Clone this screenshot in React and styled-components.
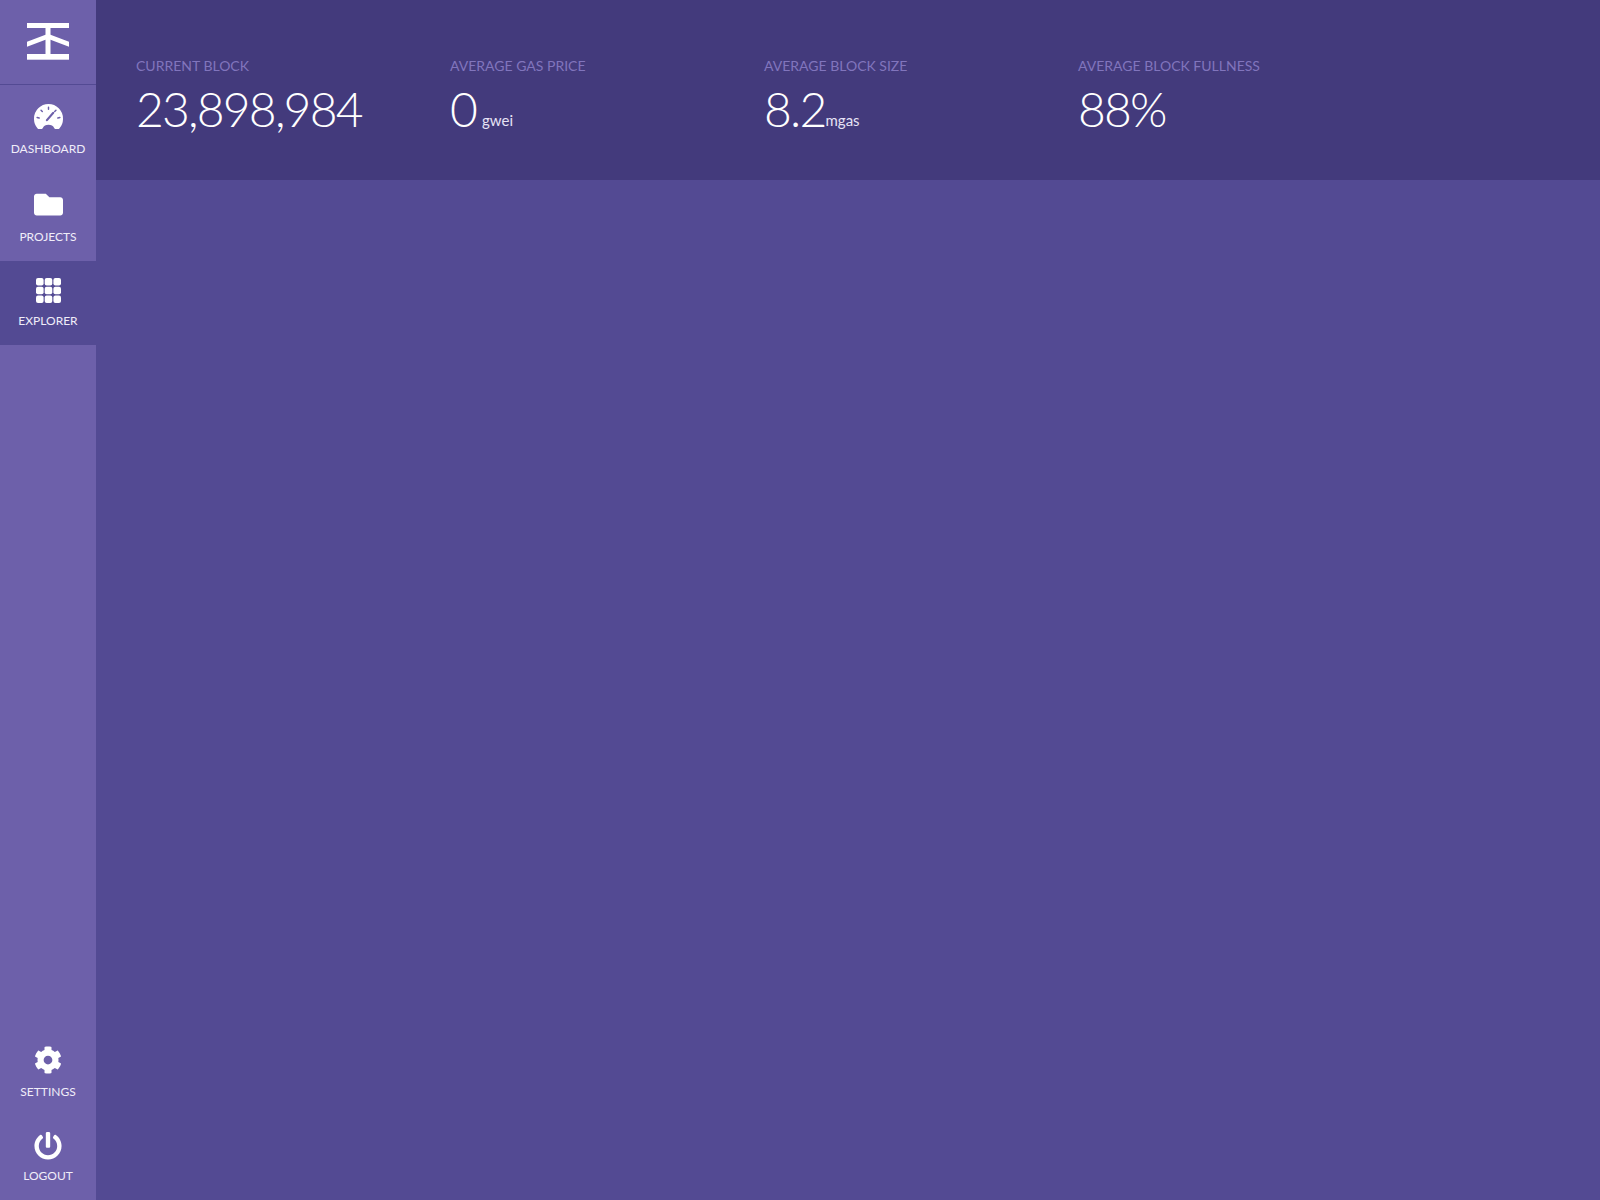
import React from 'react';
import styled, { createGlobalStyle } from 'styled-components';
import { FaFolder, FaCog, FaPowerOff } from 'react-icons/fa';

const stats = [
    { label: 'CURRENT BLOCK', value: '23,898,984' },
    { label: 'AVERAGE GAS PRICE', value: '0', unit: 'gwei', gap: 6 },
    { label: 'AVERAGE BLOCK SIZE', value: '8.2', unit: 'mgas' },
    { label: 'AVERAGE BLOCK FULLNESS', value: '88%' },
];

function Logo() {
    return (
        <svg width="42" height="37" viewBox="0 0 42 37" fill="#fff">
            <rect x="0" y="0" width="42" height="5" />
            <rect x="18.5" y="5" width="5" height="26" />
            <path d="M0 18.7 L18.5 11.7 L23.5 11.7 L42 18.7 L42 23.7 L23.5 16.7 L18.5 16.7 L0 23.7 Z" />
            <rect x="0" y="31" width="42" height="5.7" />
        </svg>
    );
}

function GaugeIcon() {
    return (
        <svg width="29" height="25" viewBox="0 0 28 24">
            <path
                fill="#fff"
                d="M14 0 A14 14 0 0 1 28 14 A14 14 0 0 1 24.5 23.5 Q24 24 23 24 L20.5 24 Q20 24 19.5 23 Q18 20 14 20 Q10 20 8.5 23 Q8 24 7.5 24 L5 24 Q4 24 3.5 23.5 A14 14 0 0 1 0 14 A14 14 0 0 1 14 0 Z"
            />
            <g stroke="#6d60aa" strokeLinecap="round" fill="none">
                <path strokeWidth="1.4" d="M14 3 V5 M6.8 6 L8 7.2 M3 13 L5 13.5 M25 13 L23 13.5 M21.2 6 L20 7.2" />
                <path strokeWidth="2.2" d="M12.5 15.5 L18.5 8.5" />
            </g>
        </svg>
    );
}

function GridIcon() {
    return (
        <svg width="25" height="25" viewBox="0 0 25 25" fill="#fff">
            {[0, 8.7, 17.4].map((y) =>
                [0, 8.7, 17.4].map((x) => <rect key={`${x}-${y}`} x={x} y={y} width="7.6" height="7.6" rx="2" />)
            )}
        </svg>
    );
}

function App() {
    return (
        <>
            <GlobalStyle />
            <Page>
                <Sidebar>
                    <LogoBox>
                        <Logo />
                    </LogoBox>
                    <NavGroup>
                        <NavItem $height={88} $top={16}>
                            <IconSlot><GaugeIcon /></IconSlot>
                            <NavLabel>DASHBOARD</NavLabel>
                        </NavItem>
                        <NavItem $height={88} $top={16}>
                            <IconSlot><FaFolder size={29} /></IconSlot>
                            <NavLabel>PROJECTS</NavLabel>
                        </NavItem>
                        <NavItem $active $height={84} $top={14} $gap={8}>
                            <IconSlot><GridIcon /></IconSlot>
                            <NavLabel>EXPLORER</NavLabel>
                        </NavItem>
                    </NavGroup>
                    <NavGroup>
                        <NavItem $height={84} $top={19} $gap={9}>
                            <IconSlot><FaCog size={28} /></IconSlot>
                            <NavLabel>SETTINGS</NavLabel>
                        </NavItem>
                        <NavItem $height={84} $top={21} $gap={7}>
                            <IconSlot><FaPowerOff size={28} /></IconSlot>
                            <NavLabel>LOGOUT</NavLabel>
                        </NavItem>
                    </NavGroup>
                </Sidebar>
                <Main>
                    <TopBar>
                        {stats.map((stat) => (
                            <Stat key={stat.label}>
                                <StatLabel>{stat.label}</StatLabel>
                                <StatValue>
                                    {stat.value}
                                    {stat.unit && <StatUnit $gap={stat.gap}>{stat.unit}</StatUnit>}
                                </StatValue>
                            </Stat>
                        ))}
                    </TopBar>
                </Main>
            </Page>
        </>
    );
}

export default App;

const GlobalStyle = createGlobalStyle`
    html, body {
        margin: 0;
        height: 100%;
    }

    body {
        font-family: "Lato", "Noto Sans", sans-serif;
        background-color: #534a93;
        color: #fff;
    }

    #root {
        height: 100%;
    }
`;

const Page = styled.div`
    display: flex;
    height: 1200px;
    overflow: hidden;
`;

const Sidebar = styled.nav`
    display: flex;
    flex-direction: column;
    justify-content: space-between;
    flex: 0 0 96px;
    background-color: #6d60aa;
`;

const LogoBox = styled.div`
    display: flex;
    align-items: center;
    justify-content: center;
    height: 85px;
    padding-bottom: 2px;
    border-bottom: 1px solid #534a93;
    box-sizing: border-box;
`;

const NavGroup = styled.div`
    display: flex;
    flex-direction: column;
    &:nth-of-type(2) {
        flex: 1;
    }
    &:last-child {
        padding-bottom: 6px;
    }
`;

const NavItem = styled.a`
    display: flex;
    flex-direction: column;
    align-items: center;
    height: ${(props) => props.$height}px;
    padding-top: ${(props) => props.$top}px;
    box-sizing: border-box;
    background-color: ${(props) => (props.$active ? '#534a93' : 'transparent')};

    span {
        margin-top: ${(props) => props.$gap || 10}px;
    }
`;

const IconSlot = styled.div`
    display: flex;
    align-items: center;
    justify-content: center;
    height: 30px;
`;

const NavLabel = styled.span`
    font-size: 12px;
    line-height: 16px;
    color: #f0edf9;
`;

const Main = styled.main`
    flex: 1;
    background-color: #534a93;
`;

const TopBar = styled.header`
    display: flex;
    height: 180px;
    padding: 56px 0 0 40px;
    box-sizing: border-box;
    background-color: #433a7c;
`;

const Stat = styled.div`
    flex: 0 0 314px;
`;

const StatLabel = styled.div`
    font-size: 14px;
    line-height: 19px;
    color: #8175bd;
`;

const StatValue = styled.div`
    margin-top: 4px;
    font-size: 48px;
    font-weight: 300;
    line-height: 60px;
    letter-spacing: -1.8px;
`;

const StatUnit = styled.span`
    margin-left: ${(props) => props.$gap || 0}px;
    font-size: 15px;
    font-weight: 400;
    letter-spacing: 0;
    vertical-align: 1px;
    color: #e6e2f5;
`;
